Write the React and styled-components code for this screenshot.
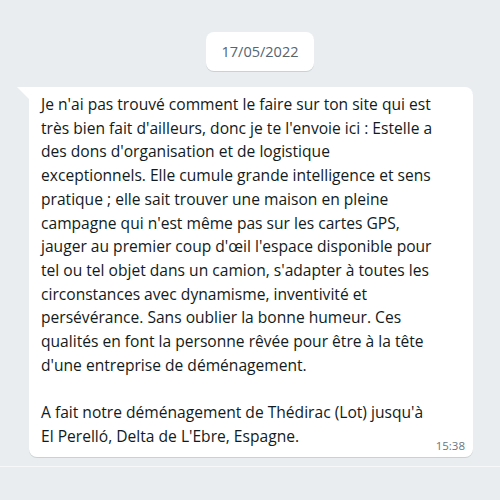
import React from 'react';
import styled, { createGlobalStyle } from 'styled-components';

const GlobalStyle = createGlobalStyle`
  html, body {
    margin: 0;
    padding: 0;
    background: #e9edef;
  }
  body {
    font-family: 'Open Sans', 'Noto Sans', 'Liberation Sans', sans-serif;
  }
`;

const Chat = styled.div`
  width: 500px;
  height: 500px;
  display: flex;
  flex-direction: column;
  background: #e9edef;
  overflow: hidden;
`;

const Messages = styled.div`
  height: 466px;
  display: flex;
  flex-direction: column;
  align-items: flex-start;
  padding-top: 32px;
  box-sizing: border-box;
`;

const DateChip = styled.div`
  margin-left: 206px;
  width: 108px;
  height: 39px;
  display: flex;
  align-items: center;
  justify-content: center;
  background: #fff;
  border-radius: 8px;
  box-shadow: 0 1px 0.5px rgba(11, 20, 26, 0.13);
  color: #54656f;
  font-size: 14.5px;
`;

const Bubble = styled.div`
  position: relative;
  margin: 16px 0 0 29px;
  width: 444px;
  box-sizing: border-box;
  padding: 6px 12px 8.5px 12px;
  background: #fff;
  border-radius: 0 8px 8px 8px;
  box-shadow: 0 1px 0.5px rgba(11, 20, 26, 0.13);
  color: #111b21;
  font-size: 15.6px;
  line-height: 23.7px;

  &::before {
    content: '';
    position: absolute;
    left: -12px;
    top: 0;
    border-right: 12px solid #fff;
    border-bottom: 12px solid transparent;
  }
`;

const Paragraph = styled.p`
  margin: 0;
  & + & {
    margin-top: 23.7px;
  }
`;

const Line = styled.span`
  display: block;
  white-space: nowrap;
`;

const Time = styled.span`
  position: absolute;
  right: 8px;
  bottom: 4.5px;
  color: #667781;
  font-size: 11.5px;
  line-height: 15px;
`;

const Footer = styled.div`
  flex: 1;
  border-top: 1px solid #f7f8f9;
  background: #e9edef;
`;

const paragraphs = [
  [
    "Je n'ai pas trouvé comment le faire sur ton site qui est",
    "très bien fait d'ailleurs, donc je te l'envoie ici : Estelle a",
    "des dons d'organisation et de logistique",
    'exceptionnels. Elle cumule grande intelligence et sens',
    'pratique ; elle sait trouver une maison en pleine',
    "campagne qui n'est même pas sur les cartes GPS,",
    "jauger au premier coup d'œil l'espace disponible pour",
    "tel ou tel objet dans un camion, s'adapter à toutes les",
    'circonstances avec dynamisme, inventivité et',
    'persévérance. Sans oublier la bonne humeur. Ces',
    'qualités en font la personne rêvée pour être à la tête',
    "d'une entreprise de déménagement.",
  ],
  [
    "A fait notre déménagement de Thédirac (Lot) jusqu'à",
    "El Perelló, Delta de L'Ebre, Espagne.",
  ],
];

export default function App() {
  return (
    <>
      <GlobalStyle />
      <Chat>
        <Messages>
          <DateChip>17/05/2022</DateChip>
          <Bubble>
            {paragraphs.map((lines, i) => (
              <Paragraph key={i}>
                {lines.map((line) => (
                  <Line key={line}>{line}</Line>
                ))}
              </Paragraph>
            ))}
            <Time>15:38</Time>
          </Bubble>
        </Messages>
        <Footer />
      </Chat>
    </>
  );
}
